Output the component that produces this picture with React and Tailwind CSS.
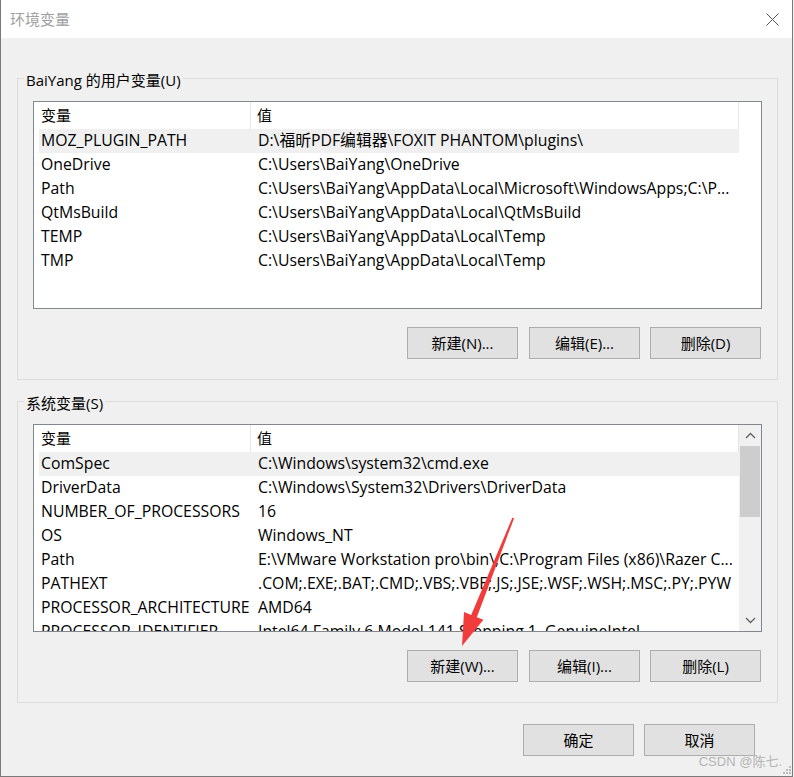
import React from 'react'

const userVars = [
  ['MOZ_PLUGIN_PATH', 'D:\\福昕PDF编辑器\\FOXIT PHANTOM\\plugins\\'],
  ['OneDrive', 'C:\\Users\\BaiYang\\OneDrive'],
  ['Path', 'C:\\Users\\BaiYang\\AppData\\Local\\Microsoft\\WindowsApps;C:\\P...'],
  ['QtMsBuild', 'C:\\Users\\BaiYang\\AppData\\Local\\QtMsBuild'],
  ['TEMP', 'C:\\Users\\BaiYang\\AppData\\Local\\Temp'],
  ['TMP', 'C:\\Users\\BaiYang\\AppData\\Local\\Temp'],
]

const sysVars = [
  ['ComSpec', 'C:\\Windows\\system32\\cmd.exe'],
  ['DriverData', 'C:\\Windows\\System32\\Drivers\\DriverData'],
  ['NUMBER_OF_PROCESSORS', '16'],
  ['OS', 'Windows_NT'],
  ['Path', 'E:\\VMware Workstation pro\\bin\\;C:\\Program Files (x86)\\Razer C...'],
  ['PATHEXT', '.COM;.EXE;.BAT;.CMD;.VBS;.VBE;.JS;.JSE;.WSF;.WSH;.MSC;.PY;.PYW'],
  ['PROCESSOR_ARCHITECTURE', 'AMD64'],
  ['PROCESSOR_IDENTIFIER', 'Intel64 Family 6 Model 141 Stepping 1, GenuineIntel'],
]

function Btn({ label, className = '' }) {
  return (
    <div className={'w-[111px] h-[32px] flex items-center justify-center bg-[#e1e1e1] border border-[#adadad] text-[15px] text-black ' + className}>
      {label}
    </div>
  )
}

function Chevron({ up }) {
  return (
    <svg width="11" height="7" viewBox="0 0 11 7">
      <polyline
        points={up ? '1,6 5.5,1.5 10,6' : '1,1 5.5,5.5 10,1'}
        fill="none"
        stroke="#606060"
        strokeWidth="1.3"
      />
    </svg>
  )
}

function VarList({ rows, scroll }) {
  return (
    <div className="ml-[15px] w-[729px] h-[208px] border border-[#828790] bg-white flex overflow-hidden">
      <div className="w-[705px] flex flex-col overflow-hidden">
        <div className="w-[705px] h-[27px] flex shrink-0 leading-[27px] border-r border-[#e5e5e5]">
          <div className="w-[217px] pl-[7px] border-r border-[#e5e5e5]">变量</div>
          <div className="flex-1 pl-[6px]">值</div>
        </div>
        {rows.map(([k, v], i) => (
          <div
            key={k + i}
            className={
              'ml-[5px] w-[700px] h-[24px] shrink-0 flex leading-[23px] text-[15.8px] whitespace-nowrap ' +
              (i === 0 ? 'bg-[#f0f0f0]' : '')
            }
          >
            <div className="w-[212px] pl-[2px] overflow-hidden">{k}</div>
            <div className="flex-1 pl-[7px] overflow-hidden">{v}</div>
          </div>
        ))}
      </div>
      {scroll && (
        <div className="w-[22px] flex flex-col bg-[#f0f0f0]">
          <div className="h-[21px] flex items-center justify-center">
            <Chevron up />
          </div>
          <div className="mx-[1px] h-[71px] bg-[#cdcdcd]" />
          <div className="flex-1" />
          <div className="h-[22px] flex items-center justify-center">
            <Chevron />
          </div>
        </div>
      )}
    </div>
  )
}

function Group({ title, rows, scroll, btns, className = '' }) {
  return (
    <div className={'w-[761px] border border-[#dcdcdc] flex flex-col pb-[20px] ' + className}>
      <span className="-mt-[9px] ml-[6px] px-[2px] self-start leading-[20px] bg-[#f0f0f0]">{title}</span>
      <div className="mt-[11px]">
        <VarList rows={rows} scroll={scroll} />
      </div>
      <div className="mt-[18px] flex justify-end pr-[16px]">
        <Btn label={btns[0]} className="mr-[11px]" />
        <Btn label={btns[1]} className="mr-[10px]" />
        <Btn label={btns[2]} />
      </div>
    </div>
  )
}

export default function App() {
  return (
    <div className="relative w-[794px] h-[777px] bg-[#f0f0f0] font-['Open_Sans','Noto_Sans_CJK_SC',sans-serif] text-[15px] text-black">
      <div className="w-[793px] h-[777px] flex flex-col border-l border-r border-b border-[#7a7a7a]">
        {/* title bar */}
        <div className="h-[38px] bg-white flex items-center justify-between pl-[9px] pr-[13px]">
          <span className="text-[#a0a0a0] text-[15px]">环境变量</span>
          <svg width="13" height="13" viewBox="0 0 13 13">
            <path d="M0.5 0.5 L12.5 12.5 M12.5 0.5 L0.5 12.5" stroke="#555" strokeWidth="1" />
          </svg>
        </div>

        <div className="flex flex-col pl-[16px]">
          <Group
            className="mt-[40px]"
            title="BaiYang 的用户变量(U)"
            rows={userVars}
            btns={['新建(N)...', '编辑(E)...', '删除(D)']}
          />
          <Group
            className="mt-[21px]"
            title="系统变量(S)"
            rows={sysVars}
            scroll
            btns={['新建(W)...', '编辑(I)...', '删除(L)']}
          />
        </div>

        <div className="mt-[21px] flex justify-end gap-[10px] pr-[37px]">
          <Btn label="确定" />
          <Btn label="取消" />
        </div>
      </div>

      {/* red annotation arrow */}
      <svg className="absolute left-0 top-0 pointer-events-none" width="794" height="777">
        <polygon
          points="514,518.4 512.4,517.6 471.2,615 464,612 462,646 483.4,619.8 476.8,617.2"
          fill="#f23c3c"
        />
      </svg>

      {/* watermark */}
      <div className="absolute right-[12px] bottom-[7px] text-[13px] leading-[16px] text-[#b4b4b4] font-['Liberation_Sans','Noto_Sans_CJK_SC',sans-serif]">
        CSDN @陈七.
      </div>
      <svg className="absolute right-[2px] bottom-[2px]" width="10" height="10" viewBox="0 0 10 10">
        <rect x="7" y="1" width="2" height="2" fill="#bdbdbd" />
        <rect x="4" y="4" width="2" height="2" fill="#bdbdbd" />
        <rect x="7" y="4" width="2" height="2" fill="#bdbdbd" />
        <rect x="1" y="7" width="2" height="2" fill="#bdbdbd" />
        <rect x="4" y="7" width="2" height="2" fill="#bdbdbd" />
        <rect x="7" y="7" width="2" height="2" fill="#bdbdbd" />
      </svg>
    </div>
  )
}
